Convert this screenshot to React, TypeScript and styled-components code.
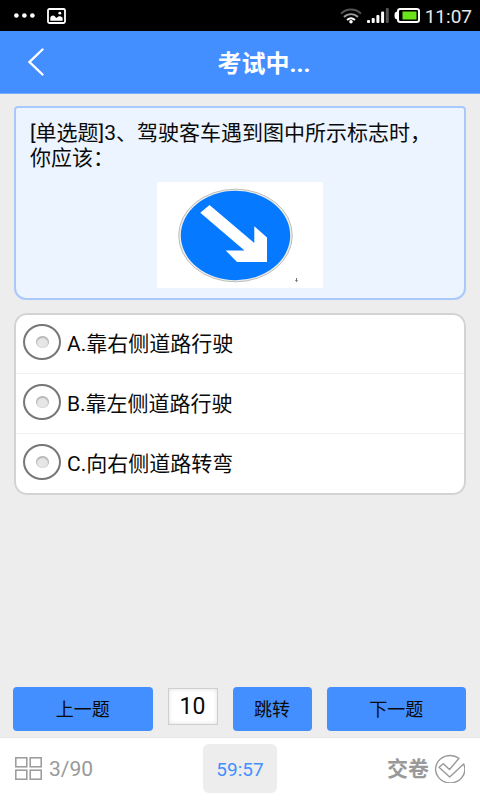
import React, { useState } from "react";
import styled, { createGlobalStyle } from "styled-components";

const BLUE = "#448fff";
const GRAY = "#999999";

const GlobalStyle = createGlobalStyle`
  *, *::before, *::after { box-sizing: border-box; }
  body {
    margin: 0;
    background: #ededed;
    color: #0a0a0a;
    font-family: Roboto, "Noto Sans CJK SC", sans-serif;
  }
  button, input { font: inherit; color: inherit; }
  button { cursor: pointer; }
  svg { display: block; flex: none; }
`;

const Screen = styled.div`
  min-height: 100vh;
  display: flex;
  flex-direction: column;
`;

const StatusBar = styled.div`
  height: 31px;
  padding: 0 8px 0 14px;
  display: flex;
  align-items: center;
  justify-content: space-between;
  background: #000;
  color: #e8e8e8;
`;

const StatusGroup = styled.div<{ $gap: number }>`
  display: flex;
  align-items: center;
  gap: ${(p) => p.$gap}px;
`;

const Clock = styled.span`
  font-size: 19px;
  line-height: 24px;
  padding-top: 3px;
`;

const Header = styled.header`
  height: 63px;
  display: grid;
  grid-template-columns: 72px 1fr 24px;
  align-items: center;
  background: ${BLUE};
  border-bottom: 1px solid #78aefc;
  color: #fff;
`;

const BackButton = styled.button`
  height: 62px;
  padding: 0;
  border: 0;
  background: none;
  display: flex;
  align-items: center;
  justify-content: center;
`;

const Title = styled.h1`
  margin: 0;
  padding-top: 4px;
  font-size: 24px;
  line-height: 32px;
  font-weight: 700;
  text-align: center;
`;

const Content = styled.main`
  flex: 1;
  display: flex;
  flex-direction: column;
  padding: 12px 14px 6px;
`;

const QuestionCard = styled.section`
  padding: 13px 14px 10px;
  border: 2px solid #a9c9fa;
  border-radius: 4px 4px 12px 12px;
  background: #ecf4ff;
`;

const QuestionText = styled.p`
  margin: 0 0 11px;
  font-size: 21px;
  line-height: 25px;
`;

const Figure = styled.div`
  width: 166px;
  margin: 0 auto;
  background: #fff;
`;

const Options = styled.fieldset`
  min-width: 0;
  margin: 13px 0 0;
  padding: 0;
  border: 2px solid #d3d3d3;
  border-radius: 13px;
  background: #fff;
`;

const Option = styled.label`
  height: 60px;
  padding: 0 7px;
  display: flex;
  align-items: center;
  gap: 6px;
  font-size: 21px;
  line-height: 28px;
  cursor: pointer;
  & + & { border-top: 1px solid #f0f0f0; }
  &:first-child { height: 58px; }
`;

const Radio = styled.input`
  appearance: none;
  flex: none;
  width: 38px;
  height: 36px;
  margin: 0 0 4px;
  border: 2px solid #777;
  border-radius: 50%;
  display: grid;
  place-items: center;
  &::before {
    content: "";
    width: 13px;
    height: 12px;
    border-radius: 50%;
    background: #e6e6e6;
    box-shadow: inset 0 1px 1px 1px #b8b8b8;
  }
  &:checked::before { background: ${BLUE}; box-shadow: none; }
`;

const Navigation = styled.div`
  margin: auto 0 0 -1px;
  display: grid;
  grid-template-columns: 140fr 50px 79px 140fr;
  column-gap: 15px;
  align-items: center;
`;

const NavButton = styled.button`
  height: 44px;
  padding: 1px 0 0;
  border: 0;
  border-radius: 4px;
  background: ${BLUE};
  font-size: 18px;
  line-height: 24px;
`;

const JumpInput = styled.input`
  width: 100%;
  height: 37px;
  padding: 0;
  margin-bottom: 5px;
  border: 1px solid #cfcfcf;
  border-radius: 0;
  background: #fff;
  box-shadow: inset 0 0 4px #dedede;
  font-size: 23px;
  text-align: center;
`;

const Footer = styled.footer`
  height: 63px;
  padding: 0 15px 2px;
  display: grid;
  grid-template-columns: 1fr auto 1fr;
  align-items: center;
  background: #fff;
  border-top: 1px solid #e6e6e6;
  color: ${GRAY};
`;

const FooterButton = styled.button<{ $end?: boolean }>`
  justify-self: ${(p) => (p.$end ? "end" : "start")};
  display: flex;
  align-items: center;
  gap: ${(p) => (p.$end ? 5 : 7)}px;
  padding: 1px 0 0;
  border: 0;
  background: none;
  font-size: 21px;
  line-height: 28px;
  font-weight: ${(p) => (p.$end ? 700 : 400)};
`;

const Timer = styled.time`
  width: 74px;
  height: 49px;
  border-radius: 6px;
  background: #ededed;
  color: ${BLUE};
  font-size: 19px;
  line-height: 51px;
  text-align: center;
`;

const GalleryIcon = () => (
  <svg width="19" height="16" viewBox="0 0 19 16" fill="none">
    <rect x="1" y="1" width="17" height="14" rx="1.5" stroke="#fff" strokeWidth="1.8" />
    <path d="M3.3 12.7V9.8C4 7.5 6.5 6.7 8 8.4l1.2 1.5 2.2-1.4c1.8-.8 3 .2 4.2 1.1v3.1z" fill="#fff" />
    <circle cx="12.8" cy="5.2" r="1.4" fill="#fff" />
  </svg>
);

const DotsIcon = () => (
  <svg width="21" height="5" viewBox="0 0 21 5" fill="#fff">
    <circle cx="2.4" cy="2.5" r="2.3" />
    <circle cx="10.4" cy="2.5" r="2.3" />
    <circle cx="18.4" cy="2.5" r="2.3" />
  </svg>
);

const WifiIcon = () => (
  <svg width="22" height="16" viewBox="0 0 22 16" fill="none" strokeWidth="1.9">
    <path d="M1 5.6C6.5.1 15.5.1 21 5.6" stroke="#555" />
    <path d="M4 9c4-3.9 10-3.9 14 0" stroke="#999" />
    <path d="M7 12c2.4-2.2 5.6-2.2 8 0" stroke="#fff" />
    <circle cx="11" cy="13.8" r="1.8" fill="#fff" />
  </svg>
);

const SignalIcon = () => (
  <svg width="22" height="15" viewBox="0 0 22 15" fill="#fff">
    <rect x="0" y="12" width="3" height="3" rx="1" />
    <rect x="4.7" y="10" width="3" height="5" rx="1" />
    <rect x="9.4" y="7" width="3" height="8" rx="1" />
    <rect x="14.1" y="3.5" width="3" height="11.5" rx="1" />
    <rect x="18.8" y="0" width="3" height="15" rx="1" fill="#555" />
  </svg>
);

const BatteryIcon = () => (
  <svg width="26" height="15" viewBox="0 0 26 15" fill="none">
    <rect x="4" y="1" width="21" height="13" rx="2.2" stroke="#fff" strokeWidth="2" />
    <path d="M3 3.5C1 3.8.5 5 .5 7.5S1 11.2 3 11.5z" fill="#fff" />
    <rect x="8.5" y="3.5" width="14" height="8" fill="#6be31a" />
  </svg>
);

const BackIcon = () => (
  <svg width="16" height="28" viewBox="0 0 16 28" fill="none">
    <path d="M14.5 1.5 1.5 14l13 12.5" stroke="#fff" strokeWidth="2.4" strokeLinecap="round" />
  </svg>
);

const KeepRightSign = () => (
  <svg width="100%" viewBox="0 0 166 106" role="img" aria-label="靠右侧道路行驶标志">
    <ellipse cx="78.5" cy="53.5" rx="56.8" ry="46.3" fill="#eeeeec" stroke="#bdbdb8" strokeWidth="1" />
    <ellipse cx="78.5" cy="53.5" rx="54.7" ry="44.7" fill="#0579ff" />
    <path d="M52.5 23 97.3 61V44.3L110 55.5V80H80L68.7 68.5H87.5L43.3 30.7z" fill="#fff" />
    <path d="M139.5 96v4M138.3 98.5h2.4" stroke="#777" strokeWidth="1" />
  </svg>
);

const GridIcon = () => (
  <svg width="27" height="23" viewBox="0 0 27 23" fill="none" stroke={GRAY} strokeWidth="1.5">
    <rect x="0.8" y="0.8" width="11" height="9" />
    <rect x="15.2" y="0.8" width="11" height="9" />
    <rect x="0.8" y="13.2" width="11" height="9" />
    <rect x="15.2" y="13.2" width="11" height="9" />
  </svg>
);

const SubmitIcon = () => (
  <svg width="31" height="29" viewBox="0 0 31 29" fill="none" stroke={GRAY} strokeWidth="1.4" strokeLinejoin="round">
    <path d="M25 4.3A14.6 13.7 0 1 0 29.7 10L15.7 23 5 13.3 9.3 9.7l6.2 5.8z" />
  </svg>
);

const answers = ["A.靠右侧道路行驶", "B.靠左侧道路行驶", "C.向右侧道路转弯"];

export default function App() {
  const [choice, setChoice] = useState<number | null>(null);
  const [target, setTarget] = useState("10");

  return (
    <Screen>
      <GlobalStyle />
      <StatusBar>
        <StatusGroup $gap={12}>
          <DotsIcon />
          <GalleryIcon />
        </StatusGroup>
        <StatusGroup $gap={5}>
          <WifiIcon />
          <SignalIcon />
          <BatteryIcon />
          <Clock>11:07</Clock>
        </StatusGroup>
      </StatusBar>
      <Header>
        <BackButton type="button" aria-label="返回">
          <BackIcon />
        </BackButton>
        <Title>考试中...</Title>
      </Header>
      <Content>
        <QuestionCard>
          <QuestionText>[单选题]3、驾驶客车遇到图中所示标志时，你应该：</QuestionText>
          <Figure>
            <KeepRightSign />
          </Figure>
        </QuestionCard>
        <Options aria-label="选项">
          {answers.map((answer, index) => (
            <Option key={answer}>
              <Radio type="radio" name="answer" checked={choice === index} onChange={() => setChoice(index)} />
              {answer}
            </Option>
          ))}
        </Options>
        <Navigation>
          <NavButton type="button">上一题</NavButton>
          <JumpInput
            aria-label="题号"
            inputMode="numeric"
            value={target}
            onChange={(event) => setTarget(event.target.value)}
          />
          <NavButton type="button">跳转</NavButton>
          <NavButton type="button">下一题</NavButton>
        </Navigation>
      </Content>
      <Footer>
        <FooterButton type="button">
          <GridIcon />
          3/90
        </FooterButton>
        <Timer>59:57</Timer>
        <FooterButton type="button" $end>
          交卷
          <SubmitIcon />
        </FooterButton>
      </Footer>
    </Screen>
  );
}
